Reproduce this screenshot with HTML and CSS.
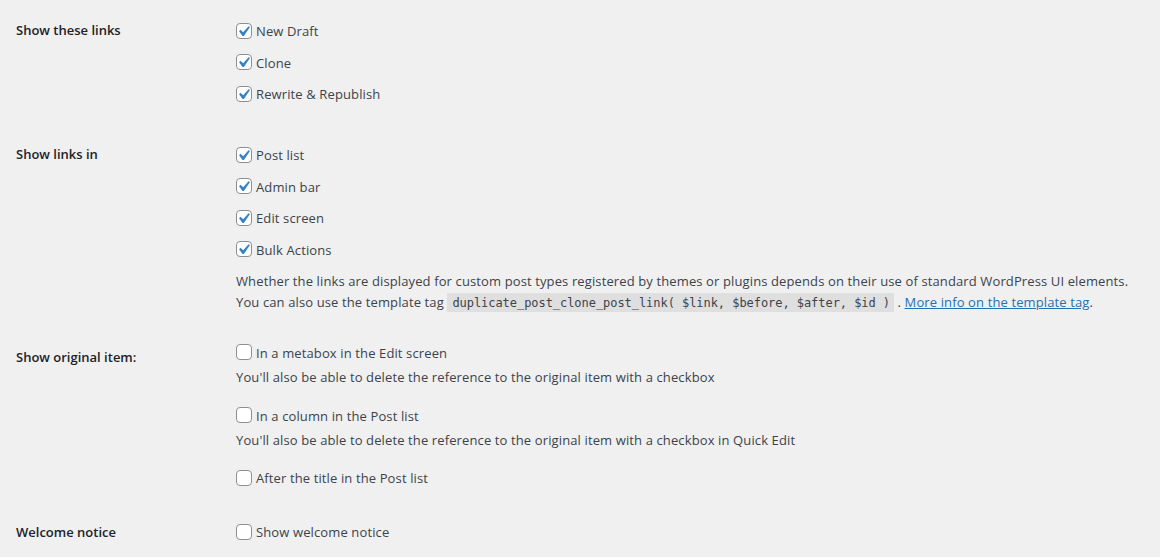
FILE: index.html
```html
<!DOCTYPE html>
<html lang="en">
<head>
<meta charset="utf-8">
<title>Duplicate Post settings</title>
<link rel="stylesheet" href="styles.css">
</head>
<body>
<div class="settings">

  <div class="row">
    <div class="th">Show these links</div>
    <div class="td">
      <div class="fs">
        <label class="opt"><span class="cb"><svg viewBox="0 0 20 20"><path d="M14.83 4.89l1.34.94-5.81 8.38H9.02L5.78 9.67l1.34-1.25 2.57 2.4z"/></svg></span>New Draft</label>
        <label class="opt"><span class="cb"><svg viewBox="0 0 20 20"><path d="M14.83 4.89l1.34.94-5.81 8.38H9.02L5.78 9.67l1.34-1.25 2.57 2.4z"/></svg></span>Clone</label>
        <label class="opt"><span class="cb"><svg viewBox="0 0 20 20"><path d="M14.83 4.89l1.34.94-5.81 8.38H9.02L5.78 9.67l1.34-1.25 2.57 2.4z"/></svg></span>Rewrite &amp; Republish</label>
      </div>
    </div>
  </div>

  <div class="row">
    <div class="th">Show links in</div>
    <div class="td">
      <div class="fs">
        <label class="opt"><span class="cb"><svg viewBox="0 0 20 20"><path d="M14.83 4.89l1.34.94-5.81 8.38H9.02L5.78 9.67l1.34-1.25 2.57 2.4z"/></svg></span>Post list</label>
        <label class="opt"><span class="cb"><svg viewBox="0 0 20 20"><path d="M14.83 4.89l1.34.94-5.81 8.38H9.02L5.78 9.67l1.34-1.25 2.57 2.4z"/></svg></span>Admin bar</label>
        <label class="opt"><span class="cb"><svg viewBox="0 0 20 20"><path d="M14.83 4.89l1.34.94-5.81 8.38H9.02L5.78 9.67l1.34-1.25 2.57 2.4z"/></svg></span>Edit screen</label>
        <label class="opt"><span class="cb"><svg viewBox="0 0 20 20"><path d="M14.83 4.89l1.34.94-5.81 8.38H9.02L5.78 9.67l1.34-1.25 2.57 2.4z"/></svg></span>Bulk Actions</label>
      </div>
      <p class="desc desc-links">Whether the links are displayed for custom post types registered by themes or plugins depends on their use of standard WordPress UI elements.<br>You can also use the template tag <code>duplicate_post_clone_post_link( $link, $before, $after, $id )</code> . <a href="#">More info on the template tag</a>.</p>
    </div>
  </div>

  <div class="row">
    <div class="th">Show original item:</div>
    <div class="td">
      <label class="opt single"><span class="cb empty"></span>In a metabox in the Edit screen</label>
      <p class="desc">You'll also be able to delete the reference to the original item with a checkbox</p>
      <label class="opt single spaced"><span class="cb empty"></span>In a column in the Post list</label>
      <p class="desc">You'll also be able to delete the reference to the original item with a checkbox in Quick Edit</p>
      <label class="opt single spaced last"><span class="cb empty"></span>After the title in the Post list</label>
    </div>
  </div>

  <div class="row">
    <div class="th">Welcome notice</div>
    <div class="td">
      <label class="opt single notice"><span class="cb empty"></span>Show welcome notice</label>
    </div>
  </div>

</div>
</body>
</html>
```

FILE: styles.css
```css
html, body {
  margin: 0;
  padding: 0;
  background: #f0f0f1;
}

body {
  font-family: "Open Sans", "Noto Sans", sans-serif;
  font-size: 13px;
  color: #3c434a;
}

.settings {
  padding: 1px 0 0 16px;
}

.row {
  display: flex;
  align-items: flex-start;
}

.th {
  width: 200px;
  flex: none;
  padding: 20px 10px 20px 0;
  font-weight: 600;
  font-size: 13px;
  line-height: 18.2px;
  color: #1d2327;
}

.td {
  flex: 1;
  padding: 15px 10px;
  letter-spacing: 0.12px;
}

.fs {
  display: flex;
  flex-direction: column;
  gap: 11.5px;
  padding: 5px 0 6px;
}

.opt {
  display: flex;
  align-items: center;
  height: 20px;
  line-height: 20px;
  white-space: nowrap;
}

.opt.spaced {
  margin-top: 17.5px;
}

.opt.spaced.last {
  margin-top: 17px;
}

.opt.notice {
  margin-top: 4px;
}

.cb {
  position: relative;
  flex: none;
  box-sizing: border-box;
  width: 16px;
  height: 16px;
  margin: -1px 4px 0 0;
  border: 1px solid #8c8f94;
  border-radius: 4px;
  background: #fff;
}

.cb svg {
  position: absolute;
  left: -4px;
  top: -3px;
  width: 21px;
  height: 21px;
  fill: #3582c4;
}

.desc {
  margin: 4.5px 0 0;
  line-height: 21px;
  white-space: nowrap;
}

.desc-links {
  margin-top: 5px;
}

code {
  font-family: "DejaVu Sans Mono", "Liberation Mono", monospace;
  font-size: 12px;
  line-height: 1;
  letter-spacing: -0.05px;
  padding: 3px 4px 2px 5px;
  margin: 0;
  background: rgba(0, 0, 0, 0.07);
  color: #3c434a;
}

a {
  color: #2271b1;
  text-decoration: underline;
}
```
